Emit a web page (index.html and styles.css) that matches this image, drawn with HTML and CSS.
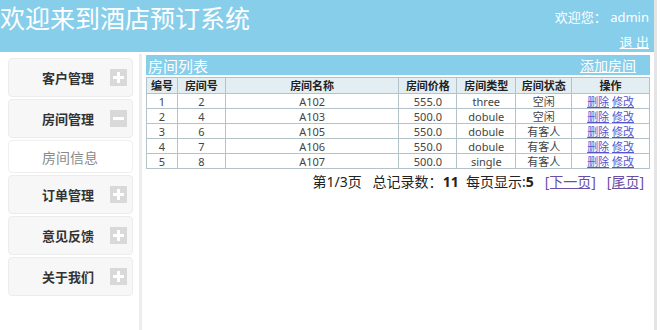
FILE: index.html
```html
<!DOCTYPE html>
<html lang="zh">
<head>
    <meta charset="UTF-8">
    <title>酒店预订系统</title>
    <link rel="stylesheet" href="styles.css">
</head>
<body>

<div class="page">
    <div class="header">
        <h1>欢迎来到酒店预订系统</h1>
        <div class="user">
            <span>欢迎您： admin</span>
            <a href="#">退 出</a>
        </div>
    </div>

    <div class="content">
        <div class="sidebar">
            <div class="menu-item"><span>客户管理</span><i class="toggle plus"></i></div>
            <div class="menu-item"><span>房间管理</span><i class="toggle minus"></i></div>
            <div class="sub-item">房间信息</div>
            <div class="menu-item"><span>订单管理</span><i class="toggle plus"></i></div>
            <div class="menu-item"><span>意见反馈</span><i class="toggle plus"></i></div>
            <div class="menu-item"><span>关于我们</span><i class="toggle plus"></i></div>
        </div>

        <div class="main">
            <div class="panel-title">
                <span>房间列表</span>
                <a href="#">添加房间</a>
            </div>
            <table>
                <tr>
                    <th class="c1">编号</th><th class="c2">房间号</th><th class="c3">房间名称</th>
                    <th class="c4">房间价格</th><th class="c5">房间类型</th><th class="c6">房间状态</th><th class="c7">操作</th>
                </tr>
                <tr><td>1</td><td>2</td><td>A102</td><td>555.0</td><td>three</td><td>空闲</td><td><a href="#">删除</a> <a href="#">修改</a></td></tr>
                <tr><td>2</td><td>4</td><td>A103</td><td>500.0</td><td>dobule</td><td>空闲</td><td><a href="#">删除</a> <a href="#">修改</a></td></tr>
                <tr><td>3</td><td>6</td><td>A105</td><td>550.0</td><td>dobule</td><td>有客人</td><td><a href="#">删除</a> <a href="#">修改</a></td></tr>
                <tr><td>4</td><td>7</td><td>A106</td><td>550.0</td><td>dobule</td><td>有客人</td><td><a href="#">删除</a> <a href="#">修改</a></td></tr>
                <tr><td>5</td><td>8</td><td>A107</td><td>500.0</td><td>single</td><td>有客人</td><td><a href="#">删除</a> <a href="#">修改</a></td></tr>
            </table>
            <div class="pager">
                第1/3页&nbsp;&nbsp;&nbsp;总记录数：<b>11</b>&nbsp;&nbsp;每页显示:<b>5</b>&nbsp;&nbsp;&nbsp;<a href="#">[下一页]</a>&nbsp;&nbsp;&nbsp;<a href="#">[尾页]</a>
            </div>
        </div>
    </div>
</div>

</body>
</html>
```

FILE: styles.css
```css
* {
    box-sizing: border-box;
}

body {
    margin: 0;
    font-family: "Noto Sans", "Noto Sans CJK SC", sans-serif;
    background: #fff;
}

.page {
    width: 657px;
    height: 330px;
    border-right: 3px solid #e4e4e4;
    display: flex;
    flex-direction: column;
}

.header {
    height: 54px;
    background-color: #87ceeb;
    color: white;
    display: flex;
    justify-content: space-between;
    border-bottom: 2px solid #fff;
}

.header h1 {
    margin: 0;
    padding-top: 3px;
    font-size: 25px;
    font-weight: normal;
    line-height: 30px;
}

.user {
    display: flex;
    flex-direction: column;
    align-items: flex-end;
    padding: 8px 5px 0 0;
    font-size: 13px;
    line-height: 19px;
}

.user a {
    color: white;
    margin-top: 6px;
}

.content {
    flex: 1;
    display: flex;
}

.sidebar {
    width: 143px;
    background: #fff;
    border-right: 3px solid #ededed;
    padding: 4px 6px 0 8px;
}

.menu-item {
    height: 39px;
    margin-bottom: 2px;
    background: #f7f7f7;
    border: 1px solid #ececec;
    border-radius: 4px;
    display: flex;
    align-items: center;
    padding-left: 33px;
    font-size: 13px;
    font-weight: bold;
    color: #333;
}

.menu-item span {
    width: 68px;
}

.toggle {
    width: 17px;
    height: 17px;
    background: #d9d9d9;
    position: relative;
}

.toggle::before,
.toggle::after {
    content: "";
    position: absolute;
    background: #fff;
}

.toggle::before {
    left: 3px;
    top: 7px;
    width: 11px;
    height: 3px;
}

.plus::after {
    left: 7px;
    top: 3px;
    width: 3px;
    height: 11px;
}

.sub-item {
    height: 33px;
    margin-bottom: 2px;
    background: #fff;
    border: 1px solid #f0f0f0;
    border-radius: 4px;
    display: flex;
    align-items: center;
    padding-left: 33px;
    font-size: 14px;
    color: #8a8a8a;
}

.main {
    flex: 1;
    padding: 1px 4px 0 4px;
}

.panel-title {
    height: 20px;
    background-color: #87ceeb;
    color: white;
    display: flex;
    justify-content: space-between;
    align-items: center;
    padding: 0 14px 0 2px;
    font-size: 15px;
}

.panel-title a {
    color: white;
    font-size: 14px;
}

table {
    width: 504px;
    margin-top: 2px;
    border-collapse: collapse;
    font-size: 11px;
    color: #444;
}

th, td {
    border: 1px solid #b4c3ca;
    text-align: center;
    padding: 0;
    height: 15px;
    line-height: 13px;
}

th {
    background-color: #e2eef2;
    color: #222;
    height: 16px;
}

.c1 { width: 31px; }
.c2 { width: 48px; }
.c3 { width: 174px; }
.c4 { width: 58px; }
.c5 { width: 59px; }
.c6 { width: 56px; }
.c7 { width: 78px; }

td a {
    color: #5555cc;
}

.pager {
    width: 504px;
    text-align: right;
    padding-right: 6px;
    margin-top: 2px;
    font-size: 14px;
    color: #222;
}

.pager a {
    color: #6a4fa8;
}
```
